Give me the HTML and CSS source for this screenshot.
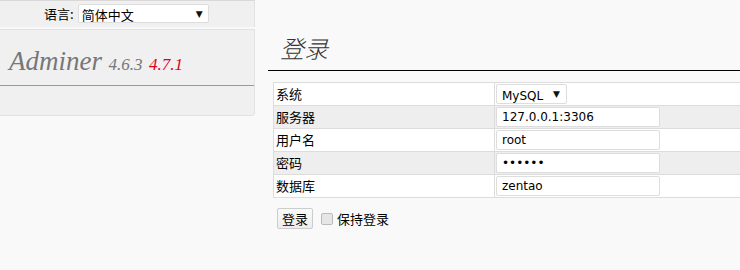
FILE: index.html
```html
<!DOCTYPE html>
<html lang="zh-CN">
<head>
<meta charset="utf-8">
<title>登录 - Adminer</title>
<link rel="stylesheet" href="styles.css">
</head>
<body>
<div class="page">
  <aside class="side">
    <form class="lang">
      <label class="lang-label">语言:</label>
      <span class="select-wrap lang-select">
        <select><option>简体中文</option></select>
      </span>
    </form>
    <div class="menu">
      <h1 class="brand"><span class="name">Adminer</span> <span class="ver">4.6.3</span> <span class="ver new">4.7.1</span></h1>
    </div>
  </aside>
  <main class="content">
    <h2 class="title">登录</h2>
    <form class="login">
      <table class="fields">
        <tr><th>系统</th><td><span class="select-wrap driver"><select><option>MySQL</option></select></span></td></tr>
        <tr class="odd"><th>服务器</th><td><input class="field" type="text" value="127.0.0.1:3306"></td></tr>
        <tr><th>用户名</th><td><input class="field" type="text" value="root"></td></tr>
        <tr class="odd"><th>密码</th><td><input class="field" type="password" value="secret"></td></tr>
        <tr><th>数据库</th><td><input class="field" type="text" value="zentao"></td></tr>
      </table>
      <div class="actions">
        <button type="button" class="btn">登录</button>
        <label class="keep"><input type="checkbox" class="check"><span>保持登录</span></label>
      </div>
    </form>
  </main>
</div>
</body>
</html>
```
FILE: styles.css
```css
html, body {
  margin: 0;
  padding: 0;
  background: #f9f9f9;
  overflow: hidden;
}
body {
  font-family: "Noto Sans CJK SC", "DejaVu Sans", sans-serif;
  font-size: 13px;
  color: #000;
}
.page {
  display: flex;
  align-items: flex-start;
  width: 740px;
  height: 270px;
}
.side {
  width: 255px;
  flex: none;
}
.lang {
  display: flex;
  align-items: center;
  padding-left: 44px;
  background: #f0f0f0;
  border-top: 1px solid #d8d8d8;
  border-right: 1px solid #e2e2e2;
  box-sizing: border-box;
  height: 27px;
}
.lang-label {
  font-size: 13px;
  margin-right: 4px;
  line-height: 18px;
}
.select-wrap {
  position: relative;
  display: inline-block;
  background: #fff;
  border: 1px solid #ddd;
  border-radius: 2px;
  box-sizing: border-box;
}
.select-wrap select {
  appearance: none;
  -webkit-appearance: none;
  border: 0;
  background: transparent;
  font-family: "Noto Sans CJK SC", sans-serif;
  font-size: 13px;
  color: #000;
  padding: 0 0 0 3px;
  margin: 0;
  width: 100%;
  height: 100%;
  outline: none;
}
.select-wrap::after {
  content: "▼";
  position: absolute;
  right: 5px;
  top: 50%;
  transform: translateY(-50%);
  font-size: 9px;
  font-family: "DejaVu Sans", sans-serif;
  pointer-events: none;
  color: #111;
}
.lang-select {
  width: 131px;
  height: 19px;
  margin-top: -1px;
}
.menu {
  margin-top: 2px;
  background: #f0f0f0;
  border: 1px solid #e2e2e2;
  border-left: 0;
  border-radius: 0 0 4px 0;
  height: 87px;
  box-sizing: border-box;
}
.brand {
  margin: 0;
  height: 56px;
  box-sizing: border-box;
  border-bottom: 1px solid #999;
  padding: 16px 0 0 9px;
  font-family: "Liberation Serif", serif;
  font-style: italic;
  font-weight: normal;
  color: #777;
  white-space: nowrap;
  line-height: 30px;
}
.brand .name {
  font-size: 27px;
}
.brand .ver {
  font-size: 17px;
  color: #777;
}
.brand .ver.new {
  color: #e0001a;
}
.content {
  flex: 1;
  padding-left: 13px;
  min-width: 0;
}
.title {
  margin: 0;
  height: 71px;
  box-sizing: border-box;
  padding: 33px 0 0 12px;
  border-bottom: 1px solid #000;
  font-size: 24px;
  line-height: 30px;
  font-style: italic;
  font-weight: 300;
  color: #333;
  margin-right: -20px;
}
.login {
  padding: 11px 0 0 5px;
}
.fields {
  border-collapse: collapse;
  width: 480px;
  border: 1px solid #ccc;
  background: #fff;
}
.fields tr {
  height: 23px;
}
.fields tr.odd {
  background: #eee;
}
.fields th, .fields td {
  border: 1px solid #dcdcdc;
  padding: 0;
  vertical-align: middle;
}
.fields th {
  width: 218px;
  text-align: left;
  font-weight: normal;
  padding-left: 2px;
  font-size: 13px;
  line-height: 18px;
}
.fields td {
  padding-left: 1px;
}
.field {
  display: block;
  width: 164px;
  height: 20px;
  box-sizing: border-box;
  margin: 0;
  border: 1px solid #ddd;
  border-radius: 2px;
  background: #fff;
  font-family: "DejaVu Sans", sans-serif;
  font-size: 12px;
  color: #000;
  padding: 0 0 0 5px;
  outline: none;
}
.driver {
  width: 71px;
  height: 20px;
  display: block;
}
.driver select {
  font-family: "DejaVu Sans", sans-serif;
  font-size: 12px;
  padding-left: 5px;
}
.driver::after {
  right: 6px;
}
.actions {
  display: flex;
  align-items: center;
  gap: 8px;
  padding: 10px 0 0 4px;
}
.btn {
  font-family: "Noto Sans CJK SC", sans-serif;
  font-size: 13px;
  height: 21px;
  padding: 0 4px;
  background: linear-gradient(#fafafa, #ececec);
  border: 1px solid #ccc;
  border-radius: 2px;
  color: #000;
  line-height: 18px;
}
.keep {
  display: flex;
  align-items: center;
  gap: 4px;
  font-size: 13px;
}
.check {
  appearance: none;
  -webkit-appearance: none;
  margin: 0;
  width: 12px;
  height: 12px;
  background: #e6e6e6;
  border: 1px solid #bbb;
  border-radius: 2px;
  box-sizing: border-box;
}
```
